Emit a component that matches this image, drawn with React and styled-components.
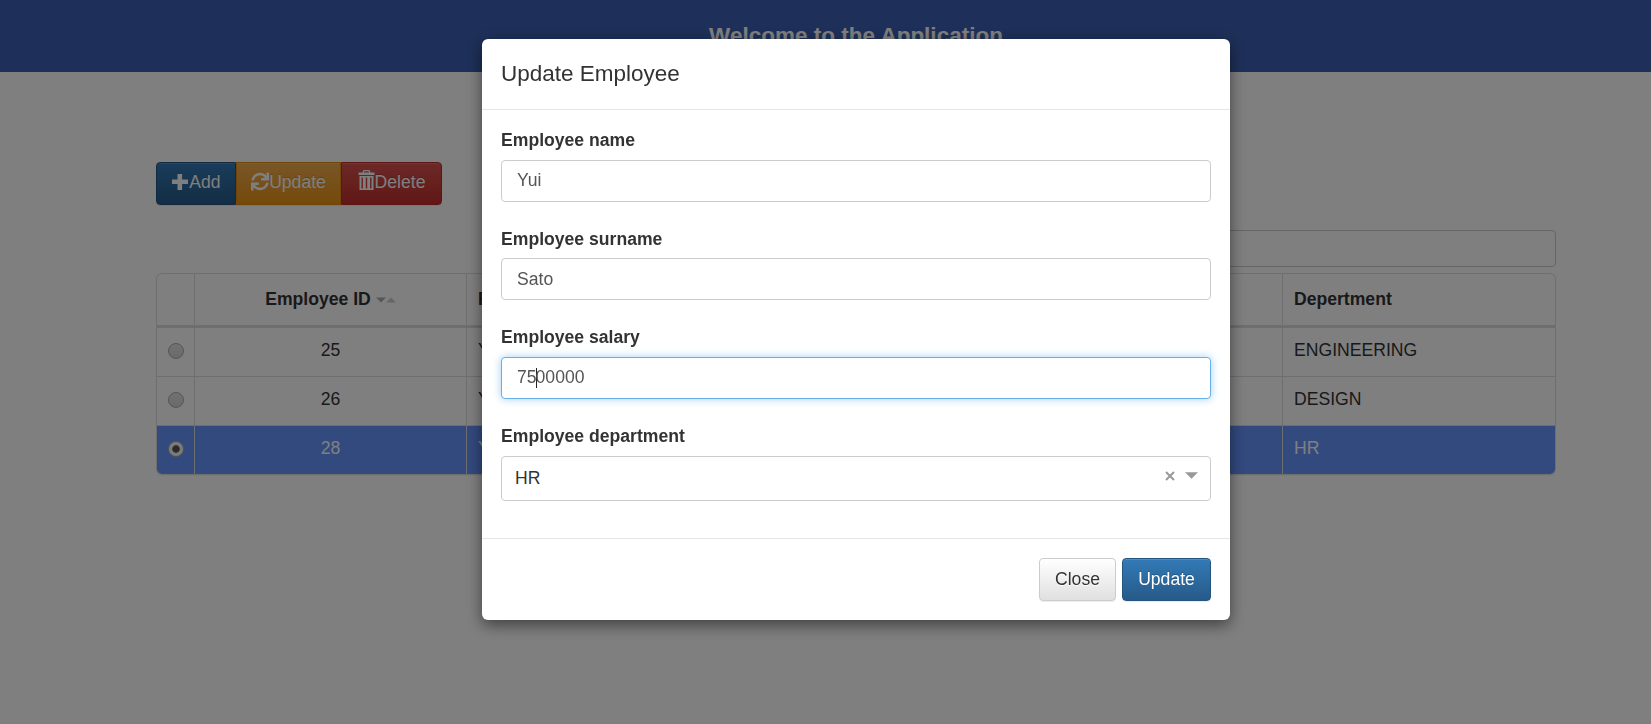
import React from "react";
import styled, { createGlobalStyle } from "styled-components";

const Global = createGlobalStyle`
  html, body { margin: 0; padding: 0; height: 100%; overflow: hidden; background: #fff; }
  body { font-family: "Liberation Sans", Arial, sans-serif; font-size: 17.6px; color: #333; }
  * { box-sizing: border-box; }
`;

const Page = styled.div`
  width: 1712px;
`;
const Banner = styled.header`
  height: 72px;
  background: #3c60b2;
  color: #fff;
  display: flex;
  align-items: center;
  justify-content: center;
  font-size: 22.5px;
  font-weight: bold;
`;
const Content = styled.main`
  width: 1400px;
  margin: 0 auto;
  padding-top: 90px;
`;
const Toolbar = styled.div`
  display: flex;
  height: 43px;
`;
const ToolButton = styled.button`
  display: flex;
  align-items: center;
  justify-content: center;
  width: ${p => p.$w}px;
  height: 43px;
  padding: 0 0 2px;
  font: 17.6px "Liberation Sans", Arial, sans-serif;
  color: #fff;
  border: 1px solid ${p => p.$border};
  background: linear-gradient(to bottom, ${p => p.$from}, ${p => p.$to});
  text-shadow: 0 -1px 0 rgba(0,0,0,.2);
  box-shadow: inset 0 1px 0 rgba(255,255,255,.15), 0 1px 1px rgba(0,0,0,.075);
  border-radius: ${p => p.$radius};
`;
const Glyph = styled.svg`
  flex: none;
  fill: #fff;
  margin-bottom: ${p => p.$lift}px;
`;
const SearchRow = styled.div`
  display: flex;
  justify-content: flex-end;
  margin-top: 25px;
`;
const SearchBox = styled.div`
  width: 500px;
  height: 37px;
  border: 1px solid #ccc;
  border-radius: 4px;
  background: #fff;
`;
const TableFrame = styled.div`
  margin-top: 6px;
  border: 1px solid #ddd;
  border-radius: 6px;
  overflow: hidden;
  box-shadow: 0 1px 1px rgba(0,0,0,.05);
`;
const Grid = styled.table`
  width: 1398px;
  table-layout: fixed;
  border-collapse: separate;
  border-spacing: 0;
  font-size: 17.6px;
`;
const Th = styled.th`
  height: 54px;
  padding: 0 11px 1px;
  font-weight: bold;
  color: #333;
  text-align: ${p => p.$center ? "center" : "left"};
  border-left: 1px solid #ddd;
  border-bottom: 3px solid #ddd;
  &:first-child { border-left: 0; }
`;
const Tr = styled.tr`
  background: ${p => p.$selected ? "#6694ff" : "transparent"};
  color: ${p => p.$selected ? "#fff" : "#333"};
`;
const Td = styled.td`
  height: 49px;
  padding: 0 11px 3px;
  text-align: ${p => p.$center ? "center" : "left"};
  border-left: 1px solid #ddd;
  border-top: 1px solid #ddd;
  &:first-child { border-left: 0; padding-bottom: 2px; }
  tr:first-child > & { border-top: 0; height: 48px; }
`;
const Radio = styled.input.attrs({ type: "radio", readOnly: true })`
  appearance: none;
  display: block;
  margin: 0 auto;
  width: 16px;
  height: 16px;
  border-radius: 50%;
  border: 1px solid #aaa;
  background: ${p => p.checked
    ? "radial-gradient(circle, #555 0 3.4px, #f4f4f4 4px)"
    : "linear-gradient(to bottom, #e4e4e4, #d4d4d4)"};
`;
const SortMark = styled.svg`
  margin-left: 5px;
  vertical-align: 2px;
`;

const Backdrop = styled.div`
  position: fixed;
  inset: 0;
  background: rgba(0,0,0,.5);
`;
const Dialog = styled.section`
  position: fixed;
  top: 39px;
  left: 482px;
  width: 748px;
  height: 581px;
  background: #fff;
  border-radius: 6px;
  box-shadow: 0 5px 15px rgba(0,0,0,.5);
  display: flex;
  flex-direction: column;
`;
const DialogHead = styled.div`
  height: 71px;
  flex: none;
  display: flex;
  align-items: center;
  padding: 0 19px;
  border-bottom: 1px solid #e5e5e5;
  font-size: 22.5px;
  color: #333;
`;
const DialogBody = styled.div`
  flex: 1;
  padding: 20.2px 19px 0;
`;
const Group = styled.div`
  margin-bottom: 27px;
`;
const Label = styled.label`
  display: block;
  height: 29.6px;
  line-height: 20px;
  font-size: 17.6px;
  font-weight: bold;
  color: #333;
`;
const Box = styled.div`
  position: relative;
  display: flex;
  align-items: center;
  height: ${p => p.$h || 42}px;
  padding-left: ${p => p.$pad || 15}px;
  border: 1px solid ${p => p.$focus ? "#66afe9" : "#ccc"};
  border-radius: 4px;
  color: ${p => p.$dark ? "#333" : "#555"};
  font-size: 17.6px;
  background: #fff;
  box-shadow: ${p => p.$focus ? "0 0 8px rgba(102,175,233,.6)" : "none"};
`;
const Caret = styled.span`
  display: inline-block;
  width: 1px;
  height: 20px;
  margin: 0 -1px 0 -1px;
  background: #222;
  vertical-align: -5px;
`;
const SelectControls = styled.div`
  position: absolute;
  right: 12px;
  top: 0;
  bottom: 0;
  padding-bottom: 5px;
  display: flex;
  align-items: center;
  gap: 10px;
`;
const DialogFoot = styled.div`
  height: 82px;
  flex: none;
  display: flex;
  justify-content: flex-end;
  align-items: flex-start;
  gap: 6px;
  padding: 19px 19px 0;
  border-top: 1px solid #e5e5e5;
`;
const FootButton = styled.button`
  height: 43px;
  width: ${p => p.$w}px;
  padding: 0;
  font: 17.6px "Liberation Sans", Arial, sans-serif;
  border-radius: 4px;
  color: ${p => p.$primary ? "#fff" : "#333"};
  border: 1px solid ${p => p.$primary ? "#245580" : "#ccc"};
  background: ${p => p.$primary
    ? "linear-gradient(to bottom, #337ab7, #265a88)"
    : "linear-gradient(to bottom, #fff, #e0e0e0)"};
  text-shadow: ${p => p.$primary ? "0 -1px 0 rgba(0,0,0,.2)" : "0 1px 0 #fff"};
  box-shadow: inset 0 1px 0 rgba(255,255,255,.15), 0 1px 1px rgba(0,0,0,.075);
`;

const PlusIcon = () => (
  <Glyph $lift={2} width="18" height="18" viewBox="0 0 18 18"><path d="M6.5 1h4.6v5.5H17v4.6h-5.9V17H6.5v-5.9H1V6.5h5.5z" /></Glyph>
);
const RefreshIcon = () => (
  <Glyph $lift={2} width="18" height="19" viewBox="0 0 512 512"><path d="M440.65 12.57l4 82.77A247.16 247.16 0 0 0 255.83 8C134.73 8 33.91 94.92 12.29 209.82A12 12 0 0 0 24.09 224h49.05a12 12 0 0 0 11.67-9.26 175.91 175.91 0 0 1 317-56.94l-101.46-4.86a12 12 0 0 0-12.57 12v47.41a12 12 0 0 0 12 12H500a12 12 0 0 0 12-12V12a12 12 0 0 0-12-12h-47.37a12 12 0 0 0-11.98 12.57zM255.83 432a175.61 175.61 0 0 1-146-77.8l101.8 4.87a12 12 0 0 0 12.57-12v-47.4a12 12 0 0 0-12-12H12a12 12 0 0 0-12 12V500a12 12 0 0 0 12 12h47.35a12 12 0 0 0 12-12.6l-4.15-82.57A247.17 247.17 0 0 0 255.83 504c121.11 0 221.93-86.92 243.55-201.82a12 12 0 0 0-11.8-14.18h-49.05a12 12 0 0 0-11.67 9.26A175.86 175.86 0 0 1 255.83 432z" /></Glyph>
);
const TrashIcon = () => (
  <Glyph $lift={5} width="17" height="20" viewBox="0 0 16 20"><path fillRule="evenodd" d="M5 0h6l1 2.5h4V5H0V2.5h4zM5.8 1.2l-.3 1.3h5l-.3-1.3zM1 6h14v14H1zM3 7.5v11h1.4v-11zM7.3 7.5v11h1.4v-11zM11.6 7.5v11H13v-11z" /></Glyph>
);

const rows = [
  { id: 25, first: "Yui", last: "Tanaka", salary: "6000000", dept: "ENGINEERING" },
  { id: 26, first: "Yuki", last: "Ito", salary: "5500000", dept: "DESIGN" },
  { id: 28, first: "Yui", last: "Sato", salary: "7500000", dept: "HR", selected: true },
];

export default function App() {
  return (
    <>
      <Global />
      <Page>
        <Banner>Welcome to the Application</Banner>
        <Content>
          <Toolbar>
            <ToolButton $w={80} $from="#337ab7" $to="#265a88" $border="#245580" $radius="4px 0 0 4px"><PlusIcon />Add</ToolButton>
            <ToolButton $w={105} $from="#f0ad4e" $to="#eb9316" $border="#e38d13" $radius="0"><RefreshIcon />Update</ToolButton>
            <ToolButton $w={101} $from="#d9534f" $to="#c12e2a" $border="#b92c28" $radius="0 4px 4px 0"><TrashIcon />Delete</ToolButton>
          </Toolbar>
          <SearchRow><SearchBox /></SearchRow>
          <TableFrame>
            <Grid>
              <colgroup>
                <col width="37" /><col width="272" /><col width="272" /><col width="272" /><col width="272" /><col />
              </colgroup>
              <thead>
                <tr>
                  <Th />
                  <Th $center>Employee ID
                    <SortMark width="20" height="6" viewBox="0 0 20 6">
                      <path d="M0 0.5h10L5 5.5z" fill="#aaa" /><path d="M10 5.5h10L15 0.5z" fill="#ccc" />
                    </SortMark>
                  </Th>
                  <Th>First name</Th>
                  <Th>Surname</Th>
                  <Th>Salary</Th>
                  <Th>Depertment</Th>
                </tr>
              </thead>
              <tbody>
                {rows.map(r => (
                  <Tr key={r.id} $selected={r.selected}>
                    <Td><Radio name="employee" checked={!!r.selected} /></Td>
                    <Td $center>{r.id}</Td>
                    <Td>{r.first}</Td>
                    <Td>{r.last}</Td>
                    <Td>{r.salary}</Td>
                    <Td>{r.dept}</Td>
                  </Tr>
                ))}
              </tbody>
            </Grid>
          </TableFrame>
        </Content>
      </Page>
      <Backdrop />
      <Dialog>
        <DialogHead>Update Employee</DialogHead>
        <DialogBody>
          <Group>
            <Label>Employee name</Label>
            <Box>Yui</Box>
          </Group>
          <Group>
            <Label>Employee surname</Label>
            <Box>Sato</Box>
          </Group>
          <Group>
            <Label>Employee salary</Label>
            <Box $focus><span>75<Caret />00000</span></Box>
          </Group>
          <Group>
            <Label>Employee department</Label>
            <Box $h={45} $pad={13} $dark>
              HR
              <SelectControls>
                <svg width="10" height="10" viewBox="0 0 10 10" stroke="#999" strokeWidth="2" fill="none"><path d="M1 1l8 8M9 1l-8 8" /></svg>
                <svg width="13" height="7" viewBox="0 0 14 7" fill="#999"><path d="M0 0h14L7 7z" /></svg>
              </SelectControls>
            </Box>
          </Group>
        </DialogBody>
        <DialogFoot>
          <FootButton $w={77}>Close</FootButton>
          <FootButton $w={89} $primary>Update</FootButton>
        </DialogFoot>
      </Dialog>
    </>
  );
}
